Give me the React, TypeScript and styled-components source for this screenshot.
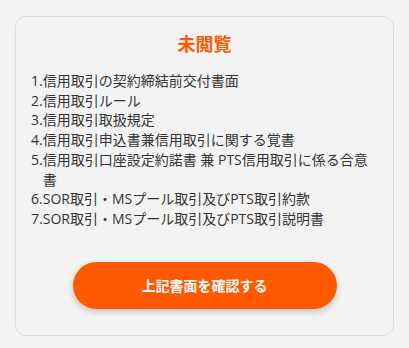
import React from "react";
import styled, { createGlobalStyle } from "styled-components";

const Global = createGlobalStyle`
  html, body { margin: 0; padding: 0; background: #f3f3f3; }
  body {
    font-family: "Open Sans", "Noto Sans CJK JP", sans-serif;
    color: #333;
  }
`;

const Page = styled.div`
  padding: 16px 15px 12px 15px;
`;

const Card = styled.section`
  box-sizing: border-box;
  width: 379px;
  height: 320px;
  border: 1px solid #dedede;
  border-radius: 11px;
  background: #f3f3f3;
  display: flex;
  flex-direction: column;
  align-items: stretch;
  padding: 14px 15px 0 15px;
`;

const Title = styled.h2`
  margin: 0;
  text-align: center;
  font-size: 18px;
  line-height: 26px;
  font-weight: 700;
  color: #ff5a00;
`;

const List = styled.ol`
  list-style: none;
  margin: 14px 0 0 0;
  padding: 0;
  font-size: 14px;
  line-height: 19.7px;
  color: #333;
`;

const Item = styled.li`
  display: flex;
`;

const Num = styled.span`
  flex: none;
`;

const Text = styled.span`
  flex: 1;
`;

const ButtonRow = styled.div`
  display: flex;
  justify-content: center;
  margin-top: 33px;
`;

const Button = styled.button`
  width: 264px;
  height: 47px;
  border: none;
  border-radius: 24px;
  background: #ff5a00;
  color: #fff;
  font-family: "Open Sans", "Noto Sans CJK JP", sans-serif;
  font-size: 14px;
  font-weight: 700;
  box-shadow: 0 3px 6px rgba(0, 0, 0, 0.2);
  cursor: pointer;
`;

const items = [
  "信用取引の契約締結前交付書面",
  "信用取引ルール",
  "信用取引取扱規定",
  "信用取引申込書兼信用取引に関する覚書",
  "信用取引口座設定約諾書 兼 PTS信用取引に係る合意書",
  "SOR取引・MSプール取引及びPTS取引約款",
  "SOR取引・MSプール取引及びPTS取引説明書",
];

export default function App() {
  return (
    <>
      <Global />
      <Page>
        <Card>
          <Title>未閲覧</Title>
          <List>
            {items.map((t, i) => (
              <Item key={i}>
                <Num>{i + 1}.</Num>
                <Text>{t}</Text>
              </Item>
            ))}
          </List>
          <ButtonRow>
            <Button>上記書面を確認する</Button>
          </ButtonRow>
        </Card>
      </Page>
    </>
  );
}
